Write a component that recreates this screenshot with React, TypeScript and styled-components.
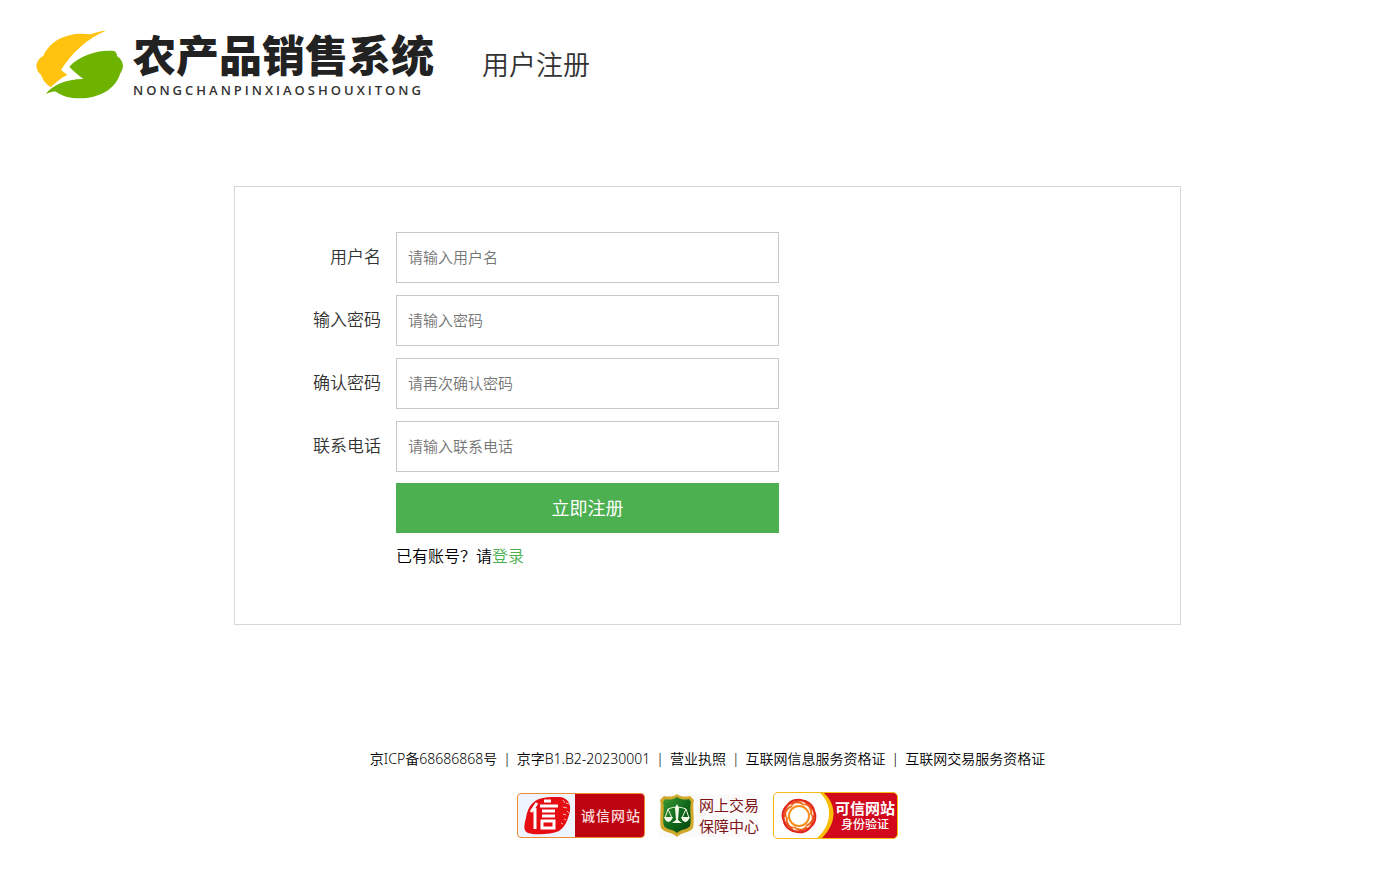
import React from "react";
import styled, { createGlobalStyle } from "styled-components";

const GlobalStyle = createGlobalStyle`
  *, *::before, *::after { box-sizing: border-box; }
  body {
    margin: 0;
    background: #fff;
    color: #000;
    font-family: "Open Sans", "Noto Sans CJK SC", sans-serif;
    font-weight: 350;
  }
  input, button { font: inherit; }
`;

const Header = styled.header`
  display: flex;
  align-items: center;
  gap: 48px;
  padding: 30px 36px 0;
`;

const Brand = styled.a`
  display: flex;
  gap: 9px;
  color: #222;
  text-decoration: none;
`;

const LeafMark = styled.svg`
  width: 88px;
  height: 70px;
`;

const BrandText = styled.span`
  display: flex;
  flex-direction: column;
`;

const BrandName = styled.span`
  font-size: 43px;
  line-height: 52px;
  font-weight: 900;
`;

const BrandLatin = styled.span`
  font-size: 13px;
  line-height: 16px;
  font-weight: 600;
  letter-spacing: 3px;
  color: #333;
`;

const PageTitle = styled.h1`
  margin: 0;
  font-size: 27px;
  line-height: 40px;
  font-weight: 350;
  color: #333;
`;

const Content = styled.main`
  padding: 86px 0 0 39px;
`;

const Panel = styled.form`
  max-width: 947px;
  margin: 0 auto;
  padding: 45px 0 56px;
  border: 1px solid #d6d6d6;
`;

const Fields = styled.div`
  display: grid;
  gap: 12px;
`;

const Row = styled.div`
  display: grid;
  grid-template-columns: 146px minmax(0, 383px);
  column-gap: 15px;
  align-items: center;
`;

const Actions = styled(Row)`
  margin-top: 11px;
  row-gap: 11px;
  & > * { grid-column: 2; }
`;

const Label = styled.label`
  padding-bottom: 2px;
  font-size: 17px;
  line-height: 24px;
  text-align: right;
  color: #333;
`;

const TextInput = styled.input`
  width: 100%;
  height: 51px;
  padding: 0 11px 2px;
  border: 1px solid #c8c8c8;
  border-radius: 0;
  font-size: 15px;
  outline: none;
  &::placeholder { color: #757575; opacity: 1; }
  &:focus { border-color: #4caf50; }
`;

const SubmitButton = styled.button`
  height: 50px;
  padding: 0 0 2px;
  border: 0;
  background: #4caf50;
  color: #fff;
  font-size: 18px;
  font-weight: 400;
  cursor: pointer;
`;

const LoginHint = styled.p`
  margin: 0;
  font-size: 16px;
  line-height: 24px;
`;

const LoginLink = styled.a`
  color: #4caf50;
  text-decoration: none;
`;

const Footer = styled.footer`
  display: flex;
  flex-direction: column;
  align-items: center;
  gap: 23px;
  padding: 124px 0 31px 39px;
`;

const Licences = styled.ul`
  display: flex;
  flex-wrap: wrap;
  margin: 0;
  padding: 0;
  list-style: none;
  font-family: "Noto Sans", "Noto Sans CJK SC", sans-serif;
  font-size: 14px;
  line-height: 20px;
`;

const Licence = styled.li`
  & + &::before {
    content: "|";
    margin: 0 6px;
  }
`;

const LicenceLink = styled.a`
  color: #000;
  text-decoration: none;
`;

const Badges = styled.div`
  display: flex;
  align-items: center;
  gap: 14px;
`;

const Badge = styled.a`
  display: flex;
  align-items: center;
  overflow: hidden;
  text-decoration: none;
`;

const HonestBadge = styled(Badge)`
  width: 128px;
  height: 45px;
  border: 1px solid #f08a2c;
  border-radius: 4px;
  background: #eff5ff;
`;

const HonestText = styled.span`
  flex: 1;
  padding-left: 6px;
  background: #be0411;
  color: #fbdcdc;
  font-size: 14px;
  line-height: 43px;
  font-weight: 500;
  letter-spacing: 1px;
`;

const TradeBadge = styled(Badge)`
  gap: 4px;
  background: #fbfafa;
`;

const TradeText = styled.span`
  display: flex;
  flex-direction: column;
  color: #7f1216;
  font-size: 15px;
  line-height: 21px;
  font-weight: 400;
`;

const TrustBadge = styled(Badge)`
  width: 125px;
  height: 47px;
  border: 1px solid #f5bd13;
  border-radius: 5px;
  background: #d2091d;
`;

const TrustText = styled.span`
  display: flex;
  flex-direction: column;
  align-items: center;
  color: #fff;
`;

const TrustName = styled.strong`
  font-size: 15px;
  line-height: 18px;
  font-weight: 700;
`;

const TrustNote = styled.span`
  font-size: 12px;
  line-height: 16px;
  font-weight: 500;
`;

const fields = [
  { id: "username", label: "用户名", type: "text", hint: "请输入用户名" },
  { id: "password", label: "输入密码", type: "password", hint: "请输入密码" },
  { id: "confirm", label: "确认密码", type: "password", hint: "请再次确认密码" },
  { id: "phone", label: "联系电话", type: "tel", hint: "请输入联系电话" },
];

const licences = [
  "京ICP备68686868号",
  "京字B1.B2-20230001",
  "营业执照",
  "互联网信息服务资格证",
  "互联网交易服务资格证",
];

const petals = [0, 60, 120, 180, 240, 300];

function Leaf() {
  return (
    <LeafMark viewBox="48 45 264 210" aria-hidden="true">
      <path
        fill="#ffc20e"
        d="M258 47C235 48 222 56 208 58C150 50 92 72 70 123C60 127 50 139 49 153C50 165 56 174 63 179C67 190 75 207 93 216C105 205 122 189 142 180L123 165C150 120 200 70 258 47Z"
      />
      <path
        fill="#6db300"
        d="M148 155C180 121 240 102 285 109Q291 115 291 124C302 130 309 142 309 154C308 164 304 171 300 177C286 224 235 250 180 250C150 250 125 243 108 230C99 228 90 232 77 237C98 210 136 193 190 192C174 179 160 169 148 155Z"
      />
    </LeafMark>
  );
}

function SealIcon() {
  return (
    <svg width="57" height="43" viewBox="0 0 57 43" aria-hidden="true">
      <path
        fill="#e60d12"
        d="M15 9C20 3 31 3 42 3C50 4 53 10 52 17C50 26 47 33 41 37C32 41 16 41 10 39C5 37 6 31 8 24C9 18 11 12 15 9Z"
      />
      <path
        d="M45 6l2 3M48 9l3 1M45 13l4 1M49 17l2 2M45 20l3 1M46 25l2 1M43 29l2 1"
        stroke="#f7b5b8"
        strokeWidth="1"
        fill="none"
      />
      <path
        d="M19 9L13 18M17 14V35M26 7H33M22 12H40M24 17H37M24 22H37M24 27H36V34H24Z"
        stroke="#fff"
        strokeWidth="3"
        fill="none"
      />
    </svg>
  );
}

function ShieldIcon() {
  return (
    <svg width="36" height="43" viewBox="0 0 36 43" aria-hidden="true">
      <defs>
        <linearGradient id="shieldGreen" x1="0" y1="0" x2="1" y2="1">
          <stop offset="0" stopColor="#3f9a35" />
          <stop offset="0.5" stopColor="#116b1c" />
          <stop offset="1" stopColor="#07440f" />
        </linearGradient>
      </defs>
      <path
        fill="#d0a92c"
        d="M18 0C21 3 27 3 31 2L35 6C33 12 36 25 34 34C31 39 22 38 18 43C14 38 5 39 2 34C0 25 3 12 1 6L5 2C9 3 15 3 18 0Z"
      />
      <path
        fill="url(#shieldGreen)"
        d="M18 3C22 6 27 6 30 5L32 8C30 15 33 25 31 32C28 36 22 35 18 39C14 35 8 36 5 32C3 25 6 15 4 8L6 5C9 6 14 6 18 3Z"
      />
      <path
        d="M18 12V28M9 15Q18 11 27 15M9 15L6 24M9 15L13 24M27 15L23 24M27 15L30 24"
        stroke="#edf6dd"
        strokeWidth="1"
        fill="none"
      />
      <path
        fill="#f4f9e8"
        d="M18 10L20 14L19 26L23 29H13L17 26L16 14ZM5 23H14Q12 28 9 28Q6 27 5 23ZM22 23H31Q29 28 26 28Q23 27 22 23Z"
      />
    </svg>
  );
}

function KnotIcon() {
  return (
    <svg width="61" height="45" viewBox="0 0 61 45" aria-hidden="true">
      <defs>
        <radialGradient id="knotRed" gradientUnits="userSpaceOnUse" cx="25" cy="23" r="18">
          <stop offset="0.4" stopColor="#fba31c" />
          <stop offset="0.7" stopColor="#f47a20" />
          <stop offset="0.9" stopColor="#e0231c" />
        </radialGradient>
      </defs>
      <path fill="#f9bd08" d="M0 0H50C63 12 63 30 48 45H0Z" />
      <path fill="#fff" d="M0 0H46C59 12 58 32 43 45H0Z" />
      <g fill="none" stroke="url(#knotRed)" strokeWidth="2">
        {petals.map((angle) => (
          <path
            key={angle}
            d="M12 24A12 12 0 0 1 36 15Q38 18 37 22"
            transform={`rotate(${angle} 25 23)`}
          />
        ))}
        <circle cx="25" cy="23" r="10" />
      </g>
    </svg>
  );
}

export default function App() {
  return (
    <>
      <GlobalStyle />
      <Header>
        <Brand href="#">
          <Leaf />
          <BrandText>
            <BrandName>农产品销售系统</BrandName>
            <BrandLatin>NONGCHANPINXIAOSHOUXITONG</BrandLatin>
          </BrandText>
        </Brand>
        <PageTitle>用户注册</PageTitle>
      </Header>
      <Content>
        <Panel onSubmit={(event) => event.preventDefault()}>
          <Fields>
            {fields.map((field) => (
              <Row key={field.id}>
                <Label htmlFor={field.id}>{field.label}</Label>
                <TextInput id={field.id} name={field.id} type={field.type} placeholder={field.hint} />
              </Row>
            ))}
          </Fields>
          <Actions>
            <SubmitButton type="submit">立即注册</SubmitButton>
            <LoginHint>
              已有账号？请<LoginLink href="#login">登录</LoginLink>
            </LoginHint>
          </Actions>
        </Panel>
      </Content>
      <Footer>
        <Licences>
          {licences.map((name) => (
            <Licence key={name}>
              <LicenceLink href="#">{name}</LicenceLink>
            </Licence>
          ))}
        </Licences>
        <Badges>
          <HonestBadge href="#">
            <SealIcon />
            <HonestText>诚信网站</HonestText>
          </HonestBadge>
          <TradeBadge href="#">
            <ShieldIcon />
            <TradeText>
              <span>网上交易</span>
              <span>保障中心</span>
            </TradeText>
          </TradeBadge>
          <TrustBadge href="#">
            <KnotIcon />
            <TrustText>
              <TrustName>可信网站</TrustName>
              <TrustNote>身份验证</TrustNote>
            </TrustText>
          </TrustBadge>
        </Badges>
      </Footer>
    </>
  );
}
